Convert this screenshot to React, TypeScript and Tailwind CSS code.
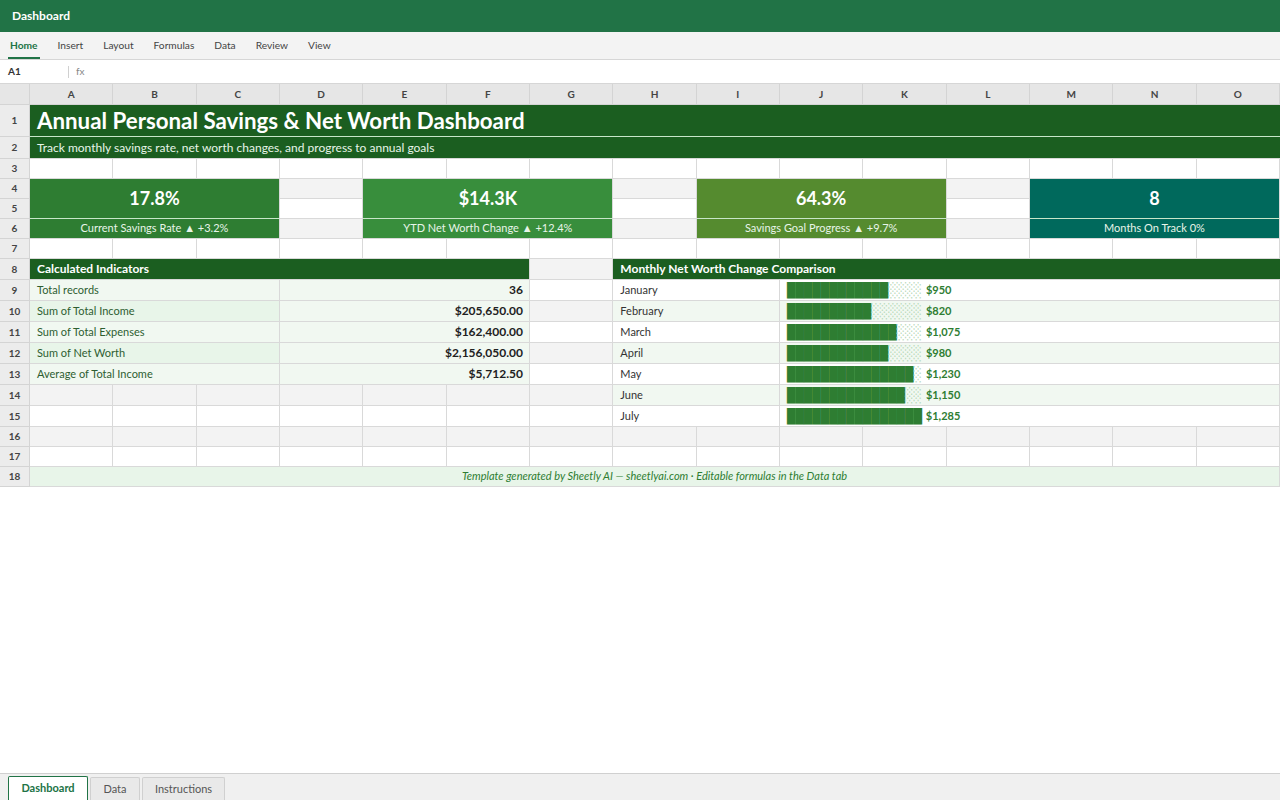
import React from "react";

const COLS = ["A", "B", "C", "D", "E", "F", "G", "H", "I", "J", "K", "L", "M", "N", "O"];

const FONT = { fontFamily: "Lato, 'Open Sans', 'Liberation Sans', sans-serif" };

function RowHead({ n }: { n: number }) {
  return (
    <div className="flex items-center justify-center border-r border-b border-[#d4d4d4] bg-[#ececec] text-[10px] font-bold text-[#444]">
      {n}
    </div>
  );
}

function Empty({ n }: { n: number }) {
  return (
    <div
      className={
        "border-r border-b border-[#d9d9d9] " + (n % 2 === 0 ? "bg-[#f3f3f3]" : "bg-white")
      }
    />
  );
}

const kpis = [
  { value: "17.8%", label: "Current Savings Rate ▲ +3.2%", bg: "bg-[#2e7d32]" },
  { value: "$14.3K", label: "YTD Net Worth Change ▲ +12.4%", bg: "bg-[#388e3c]" },
  { value: "64.3%", label: "Savings Goal Progress ▲ +9.7%", bg: "bg-[#558b2f]" },
  { value: "8", label: "Months On Track 0%", bg: "bg-[#00695c]" },
];

const indicators = [
  { label: "Total records", value: "36" },
  { label: "Sum of Total Income", value: "$205,650.00" },
  { label: "Sum of Total Expenses", value: "$162,400.00" },
  { label: "Sum of Net Worth", value: "$2,156,050.00" },
  { label: "Average of Total Income", value: "$5,712.50" },
];

const months = [
  { m: "January", v: 950, t: "$950" },
  { m: "February", v: 820, t: "$820" },
  { m: "March", v: 1075, t: "$1,075" },
  { m: "April", v: 980, t: "$980" },
  { m: "May", v: 1230, t: "$1,230" },
  { m: "June", v: 1150, t: "$1,150" },
  { m: "July", v: 1285, t: "$1,285" },
];

function Bar({ v, t }: { v: number; t: string }) {
  const full = Math.round((v / 1285) * 16);
  return (
    <div className="flex items-center border-r border-b border-[#d9d9d9] pl-[7px] overflow-hidden">
      <span
        className="text-[14px] leading-none whitespace-pre"
        style={{ fontFamily: "'DejaVu Sans Mono', monospace" }}
      >
        <span className="text-[#2e7d32]">{"█".repeat(full)}</span>
        <span className="text-[#b7d9b9]">{"░".repeat(16 - full)}</span>
      </span>
      <span className="ml-[4px] text-[11px] font-bold text-[#2e7d32]">{t}</span>
    </div>
  );
}

export default function App() {
  const cells: React.ReactNode[] = [];
  let k = 0;
  const key = () => k++;

  // header row
  cells.push(<div key={key()} className="border-r border-b border-[#d4d4d4] bg-[#e6e6e6]" />);
  COLS.forEach((c) =>
    cells.push(
      <div
        key={key()}
        className="flex items-center justify-center border-r border-b border-[#d4d4d4] bg-[#e6e6e6] text-[10px] font-bold text-[#444]"
      >
        {c}
      </div>
    )
  );

  // row 1
  cells.push(<RowHead key={key()} n={1} />);
  cells.push(
    <div
      key={key()}
      className="col-span-15 flex items-center border-b border-[#c8e6c9] bg-[#1b5e20] pl-[7px] text-[22.3px] font-bold text-white"
    >
      Annual Personal Savings &amp; Net Worth Dashboard
    </div>
  );
  // row 2
  cells.push(<RowHead key={key()} n={2} />);
  cells.push(
    <div
      key={key()}
      className="col-span-15 flex items-center border-b border-[#d9d9d9] bg-[#1b5e20] pl-[7px] text-[12px] text-[#e8f5e9]"
    >
      Track monthly savings rate, net worth changes, and progress to annual goals
    </div>
  );
  // row 3
  cells.push(<RowHead key={key()} n={3} />);
  COLS.forEach(() => cells.push(<Empty key={key()} n={3} />));
  // row 4
  cells.push(<RowHead key={key()} n={4} />);
  kpis.forEach((kp, i) => {
    cells.push(
      <div
        key={key()}
        className={
          "col-span-3 row-span-2 flex items-center justify-center border-r border-b border-r-[#d9d9d9] border-b-[#c8e6c9] text-[18px] font-bold text-white " +
          kp.bg
        }
      >
        {kp.value}
      </div>
    );
    if (i < 3) cells.push(<Empty key={key()} n={4} />);
  });
  // row 5
  cells.push(<RowHead key={key()} n={5} />);
  for (let i = 0; i < 3; i++) cells.push(<Empty key={key()} n={5} />);
  // row 6
  cells.push(<RowHead key={key()} n={6} />);
  kpis.forEach((kp, i) => {
    cells.push(
      <div
        key={key()}
        className={
          "col-span-3 flex items-center justify-center border-r border-b border-[#d9d9d9] text-[11px] text-[#e8f5e9] " +
          kp.bg
        }
      >
        {kp.label}
      </div>
    );
    if (i < 3) cells.push(<Empty key={key()} n={6} />);
  });
  // row 7
  cells.push(<RowHead key={key()} n={7} />);
  COLS.forEach(() => cells.push(<Empty key={key()} n={7} />));
  // row 8
  cells.push(<RowHead key={key()} n={8} />);
  cells.push(
    <div
      key={key()}
      className="col-span-6 flex items-center border-r border-b border-[#d9d9d9] bg-[#1b5e20] pl-[7px] text-[12px] font-bold text-white"
    >
      Calculated Indicators
    </div>
  );
  cells.push(<Empty key={key()} n={8} />);
  cells.push(
    <div
      key={key()}
      className="col-span-8 flex items-center border-b border-[#d9d9d9] bg-[#1b5e20] pl-[7px] text-[12px] font-bold text-white"
    >
      Monthly Net Worth Change Comparison
    </div>
  );
  // rows 9-15
  months.forEach((mo, i) => {
    const n = 9 + i;
    cells.push(<RowHead key={key()} n={n} />);
    const ind = indicators[i];
    if (ind) {
      const even = n % 2 === 0;
      cells.push(
        <div
          key={key()}
          className={
            "col-span-3 flex items-center border-r border-b border-[#d9d9d9] pl-[7px] text-[11px] text-[#2e5e31] " +
            (even ? "bg-[#e8f5e9]" : "bg-[#f1f8f1]")
          }
        >
          {ind.label}
        </div>
      );
      cells.push(
        <div
          key={key()}
          className="col-span-3 flex items-center justify-end border-r border-b border-[#d9d9d9] bg-[#f1f8f1] pr-[6px] text-[12px] font-bold text-[#212121]"
        >
          {ind.value}
        </div>
      );
      cells.push(<Empty key={key()} n={n} />);
    } else {
      for (let c = 0; c < 7; c++) cells.push(<Empty key={key()} n={n} />);
    }
    const bg = n % 2 === 0 ? "bg-[#f1f8f1]" : "bg-white";
    cells.push(
      <div
        key={key()}
        className={
          "col-span-2 flex items-center border-r border-b border-[#d9d9d9] pl-[7px] text-[11px] text-[#333] " + bg
        }
      >
        {mo.m}
      </div>
    );
    cells.push(
      <div key={key()} className={"col-span-6 grid " + bg}>
        <Bar v={mo.v} t={mo.t} />
      </div>
    );
  });
  // rows 16-17
  [16, 17].forEach((n) => {
    cells.push(<RowHead key={key()} n={n} />);
    COLS.forEach(() => cells.push(<Empty key={key()} n={n} />));
  });
  // row 18
  cells.push(<RowHead key={key()} n={18} />);
  cells.push(
    <div
      key={key()}
      className="col-span-15 flex items-center justify-center border-r border-b border-[#d9d9d9] bg-[#e8f5e9] text-[11px] italic text-[#2e7d32]"
    >
      Template generated by Sheetly AI — sheetlyai.com · Editable formulas in the Data tab
    </div>
  );

  const tabs = ["Home", "Insert", "Layout", "Formulas", "Data", "Review", "View"];

  return (
    <div className="flex h-[800px] w-[1280px] flex-col overflow-hidden bg-white" style={FONT}>
      <div className="flex h-[32px] shrink-0 items-center bg-[#217346] pl-[12px] text-[12px] font-bold text-white">
        Dashboard
      </div>
      <div className="flex h-[28px] shrink-0 items-stretch border-b border-[#d6d6d6] bg-[#f3f3f3]">
        {tabs.map((t, i) => (
          <div key={t} className="flex items-stretch px-[8px]">
            <span
              className={
                "flex items-center px-[2px] pt-[2px] text-[10.2px] " +
                (i === 0
                  ? "border-b-2 border-[#217346] font-bold text-[#217346]"
                  : "border-b-2 border-transparent text-[#444]")
              }
            >
              {t}
            </span>
          </div>
        ))}
      </div>
      <div className="flex h-[24px] shrink-0 items-center border-b border-[#d6d6d6] bg-white">
        <div className="w-[68px] pl-[8px] text-[10px] font-bold text-[#333]">A1</div>
        <div className="h-[12px] w-px bg-[#d0d0d0]" />
        <div className="pl-[7px] text-[10px] text-[#888]">fx</div>
      </div>
      <div className="flex-1">
        <div className="grid grid-cols-[30px_repeat(15,minmax(0,1fr))] grid-rows-[21px_32px_22px_20px_20px_20px_20px_20px_21px_21px_21px_21px_21px_21px_21px_21px_20px_20px_20px]">
          {cells}
        </div>
      </div>
      <div className="flex h-[27px] shrink-0 items-end gap-[2px] border-t border-[#d0d0d0] bg-[#f0f0f0] pl-[8px]">
        <div className="flex h-[24px] w-[80px] items-center justify-center rounded-t-[2px] border border-b-0 border-[#217346] bg-white text-[11px] font-bold text-[#217346]">
          Dashboard
        </div>
        <div className="flex h-[23px] w-[50px] items-center justify-center rounded-t-[2px] border border-b-0 border-[#d0d0d0] bg-[#e9e9e9] text-[11px] text-[#555]">
          Data
        </div>
        <div className="flex h-[23px] w-[83px] items-center justify-center rounded-t-[2px] border border-b-0 border-[#d0d0d0] bg-[#e9e9e9] text-[11px] text-[#555]">
          Instructions
        </div>
      </div>
    </div>
  );
}
